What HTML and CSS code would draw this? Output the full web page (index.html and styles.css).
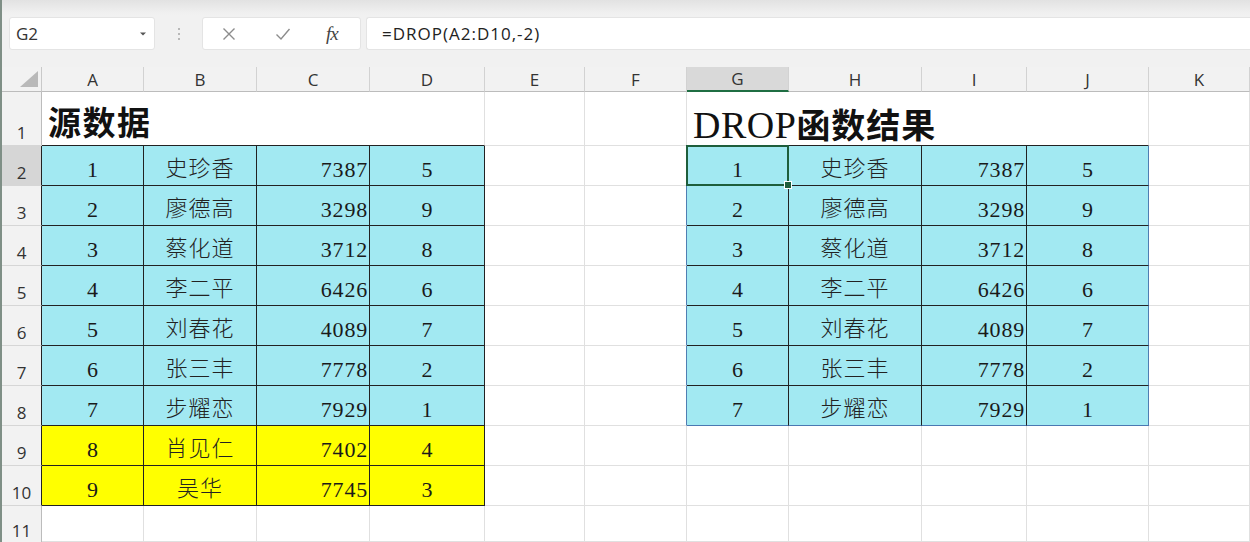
FILE: index.html
```html
<!DOCTYPE html>
<html lang="zh-CN">
<head>
<meta charset="utf-8">
<title>DROP函数</title>
<link rel="stylesheet" href="styles.css">
</head>
<body>
<div class="app">
  <div class="toolbar">
    <div class="namebox">
      <span class="name">G2</span>
      <svg class="dd" width="8" height="6" viewBox="0 0 8 6"><path d="M1 1.5 L4 4.5 L7 1.5 Z" fill="#555"/></svg>
    </div>
    <div class="grip"><i></i><i></i><i></i></div>
    <div class="btns">
      <svg class="ico" width="20" height="20" viewBox="0 0 20 20"><path d="M4.5 4.5 L15.5 15.5 M15.5 4.5 L4.5 15.5" stroke="#8c8c8c" stroke-width="1.4" fill="none"/></svg>
      <svg class="ico" width="20" height="20" viewBox="0 0 20 20"><path d="M3.5 10.5 L8 15 L16.5 5" stroke="#8c8c8c" stroke-width="1.4" fill="none"/></svg>
      <span class="fx">fx</span>
    </div>
    <div class="formula">=DROP(A2:D10,-2)</div>
  </div>

  <div class="sheet">
    <!-- header row -->
    <div class="corner"><svg width="22" height="18" viewBox="0 0 22 18"><path d="M20 1 L20 17 L2 17 Z" fill="#b9b9b9"/></svg></div>
    <div class="ch">A</div><div class="ch">B</div><div class="ch">C</div><div class="ch">D</div><div class="ch">E</div><div class="ch">F</div>
    <div class="ch sel">G</div><div class="ch">H</div><div class="ch">I</div><div class="ch">J</div><div class="ch">K</div>

    <!-- row 1 -->
    <div class="rh">1</div>
    <div class="c title tl span4">源数据</div>
    <div class="c"></div><div class="c"></div>
    <div class="c title tr span4"><span class="lat">DROP</span>函数结果</div>
    <div class="c"></div>

    <!-- row 2 -->
    <div class="rh edge rsel">2</div>
    <div class="t">1</div><div class="t cn">史珍香</div><div class="t num">7387</div><div class="t">5</div>
    <div class="c"></div><div class="c fedge"></div>
    <div class="t g2">1</div><div class="t cn">史珍香</div><div class="t num">7387</div><div class="t jedge">5</div>
    <div class="c"></div>

    <!-- row 3 -->
    <div class="rh edge">3</div>
    <div class="t">2</div><div class="t cn">廖德高</div><div class="t num">3298</div><div class="t">9</div>
    <div class="c"></div><div class="c fedge"></div>
    <div class="t">2</div><div class="t cn">廖德高</div><div class="t num">3298</div><div class="t jedge">9</div>
    <div class="c"></div>

    <!-- row 4 -->
    <div class="rh edge">4</div>
    <div class="t">3</div><div class="t cn">蔡化道</div><div class="t num">3712</div><div class="t">8</div>
    <div class="c"></div><div class="c fedge"></div>
    <div class="t">3</div><div class="t cn">蔡化道</div><div class="t num">3712</div><div class="t jedge">8</div>
    <div class="c"></div>

    <!-- row 5 -->
    <div class="rh edge">5</div>
    <div class="t">4</div><div class="t cn">李二平</div><div class="t num">6426</div><div class="t">6</div>
    <div class="c"></div><div class="c fedge"></div>
    <div class="t">4</div><div class="t cn">李二平</div><div class="t num">6426</div><div class="t jedge">6</div>
    <div class="c"></div>

    <!-- row 6 -->
    <div class="rh edge">6</div>
    <div class="t">5</div><div class="t cn">刘春花</div><div class="t num">4089</div><div class="t">7</div>
    <div class="c"></div><div class="c fedge"></div>
    <div class="t">5</div><div class="t cn">刘春花</div><div class="t num">4089</div><div class="t jedge">7</div>
    <div class="c"></div>

    <!-- row 7 -->
    <div class="rh edge">7</div>
    <div class="t">6</div><div class="t cn">张三丰</div><div class="t num">7778</div><div class="t">2</div>
    <div class="c"></div><div class="c fedge"></div>
    <div class="t">6</div><div class="t cn">张三丰</div><div class="t num">7778</div><div class="t jedge">2</div>
    <div class="c"></div>

    <!-- row 8 -->
    <div class="rh edge">8</div>
    <div class="t">7</div><div class="t cn">步耀恋</div><div class="t num">7929</div><div class="t">1</div>
    <div class="c"></div><div class="c fedge"></div>
    <div class="t bedge">7</div><div class="t cn bedge">步耀恋</div><div class="t num bedge">7929</div><div class="t jedge bedge">1</div>
    <div class="c"></div>

    <!-- row 9 -->
    <div class="rh edge">9</div>
    <div class="t y">8</div><div class="t y cn">肖见仁</div><div class="t y num">7402</div><div class="t y">4</div>
    <div class="c"></div><div class="c"></div>
    <div class="c"></div><div class="c"></div><div class="c"></div><div class="c"></div>
    <div class="c"></div>

    <!-- row 10 -->
    <div class="rh edge">10</div>
    <div class="t y">9</div><div class="t y cn">吴华</div><div class="t y num">7745</div><div class="t y">3</div>
    <div class="c"></div><div class="c"></div>
    <div class="c"></div><div class="c"></div><div class="c"></div><div class="c"></div>
    <div class="c"></div>

    <!-- row 11 -->
    <div class="rh last">11</div>
    <div class="c"></div><div class="c"></div><div class="c"></div><div class="c"></div>
    <div class="c"></div><div class="c"></div>
    <div class="c"></div><div class="c"></div><div class="c"></div><div class="c"></div>
    <div class="c"></div>
  </div>
</div>
</body>
</html>
```

FILE: styles.css
```css
* { box-sizing: border-box; }
html, body { margin: 0; padding: 0; }
body {
  width: 1250px;
  height: 542px;
  overflow: hidden;
  background: #ffffff;
  font-family: "Open Sans", "Noto Sans", sans-serif;
}
.app {
  width: 1250px;
  height: 542px;
  overflow: hidden;
  border-left: 2px solid #7f8f86;
}

/* ---------- toolbar ---------- */
.toolbar {
  height: 67px;
  display: flex;
  align-items: flex-start;
  padding: 17px 0 0 7px;
  background: linear-gradient(#e2e2e2 0px, #efefef 12px, #f1f1f1 16px);
}
.namebox {
  width: 146px;
  height: 33px;
  background: #fff;
  border: 1px solid #e4e4e4;
  border-radius: 3px;
  display: flex;
  align-items: center;
  justify-content: space-between;
  padding: 0 7px 0 6px;
}
.name { font-size: 17px; color: #333; }
.grip {
  width: 47px;
  height: 33px;
  display: flex;
  flex-direction: column;
  align-items: center;
  justify-content: center;
  gap: 3px;
}
.grip i {
  display: block;
  width: 2px;
  height: 2px;
  background: #a5a5a5;
  border-radius: 1px;
}
.btns {
  width: 159px;
  height: 33px;
  background: #fff;
  border: 1px solid #e4e4e4;
  border-radius: 3px;
  display: flex;
  align-items: center;
  padding-left: 16px;
  gap: 34px;
}
.fx {
  font-family: "Liberation Serif", serif;
  font-style: italic;
  font-size: 19px;
  color: #444;
  margin-left: -1px;
  letter-spacing: -1px;
}
.formula {
  flex: 1;
  height: 33px;
  margin-left: 5px;
  background: #fff;
  border: 1px solid #e4e4e4;
  border-right: none;
  border-radius: 3px 0 0 3px;
  padding-left: 15px;
  display: flex;
  align-items: center;
  font-size: 17px;
  letter-spacing: 1px;
  color: #222;
}

/* ---------- sheet ---------- */
.sheet {
  display: grid;
  grid-template-columns: 40px 102px 113px 113px 115px 100px 102px 102px 133px 105px 122px 101px;
  grid-template-rows: 25px 54px repeat(9, 40px) 36px;
}
.corner {
  background: #f2f2f2;
  border-right: 1px solid #c9c9c9;
  border-bottom: 1px solid #bcbcbc;
  display: flex;
  align-items: flex-end;
  justify-content: flex-end;
  padding: 0 1px 3px 0;
}
.ch {
  background: #f2f2f2;
  border-right: 1px solid #d2d2d2;
  border-bottom: 1px solid #bcbcbc;
  display: flex;
  align-items: flex-end;
  justify-content: center;
  font-size: 17px;
  line-height: 22px;
  color: #333;
}
.ch.sel {
  background: #d9d9d9;
  border-bottom: 2px solid #1f6e43;
}
.rh {
  background: #f2f2f2;
  border-right: 1px solid #bcbcbc;
  border-bottom: 1px solid #d6d6d6;
  display: flex;
  align-items: flex-end;
  justify-content: center;
  font-size: 17px;
  line-height: 22px;
  color: #333;
  padding-bottom: 1px;
}
.rh.edge { border-right-color: #222; }
.rh.rsel { background: #d6d6d6; }
.rh.last { border-bottom: none; padding-bottom: 0; }

.c {
  background: #fff;
  border-right: 1px solid #e0e0e0;
  border-bottom: 1px solid #e0e0e0;
}
.span4 { grid-column: span 4; }
.title {
  border-bottom-color: #222;
  font-family: "Noto Sans CJK SC", sans-serif;
  font-weight: 700;
  font-size: 33px;
  line-height: 40px;
  color: #111;
  white-space: nowrap;
}
.title.tl { padding: 9px 0 0 6px; letter-spacing: 1.5px; }
.title.tr { padding: 12px 0 0 6px; font-size: 34px; letter-spacing: 1px; }
.lat {
  font-family: "Liberation Serif", serif;
  font-weight: 400;
  font-size: 38px;
  letter-spacing: 0.5px;
}
.fedge { border-right-color: #4f7eb3; }

.t {
  background: #a2e9f2;
  border-right: 1px solid #222;
  border-bottom: 1px solid #222;
  display: flex;
  justify-content: center;
  align-items: flex-start;
  padding-top: 12px;
  font-family: "Liberation Serif", serif;
  font-size: 22px;
  line-height: 24px;
  color: #1a1a1a;
}
.t.cn {
  font-family: "Noto Sans CJK SC", sans-serif;
  font-weight: 300;
  font-size: 22px;
  letter-spacing: 1px;
  padding-top: 8px;
  color: #222;
}
.t.num { justify-content: flex-end; padding-right: 1px; letter-spacing: 0.8px; }
.t.y { background: #ffff00; }
.t.jedge { border-right-color: #4f7eb3; }
.t.bedge { border-bottom-color: #4a78b2; }

.g2 { position: relative; }
.g2::before {
  content: "";
  position: absolute;
  left: -1px;
  top: -1px;
  right: -1px;
  bottom: -1px;
  border: 2px solid #1e5e3c;
}
.g2::after {
  content: "";
  position: absolute;
  right: -4px;
  bottom: -4px;
  width: 6px;
  height: 6px;
  background: #1e5e3c;
  border: 1px solid #fff;
}
```
